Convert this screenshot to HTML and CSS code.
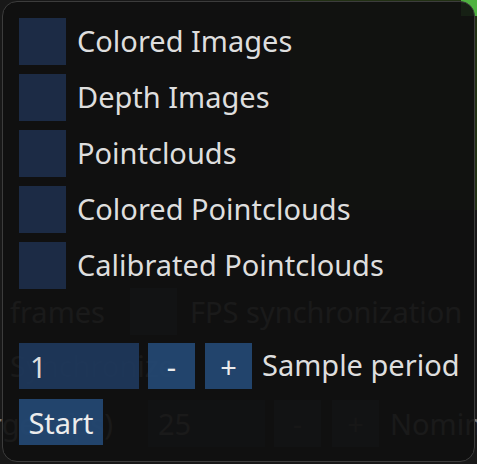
FILE: index.html
```
<!DOCTYPE html>
<html>
<head>
<meta charset="utf-8">
<link rel="stylesheet" href="styles.css">
</head>
<body>
<div class="scene">
  <div class="bg">
    <div class="bg-top"><div class="bg-panel"><span class="bg-green"></span></div></div>
    <div class="bg-row r1">
      <span class="g-text g-frames">frames</span>
      <span class="g-box"></span>
      <span class="g-text">FPS synchronization</span>
    </div>
    <div class="bg-row r2">
      <span class="g-text g-sync">Synchronize</span>
    </div>
    <div class="bg-row r3">
      <span class="g-text g-target">Target (fps)</span>
      <span class="g-input">25</span>
      <span class="g-box g-btn">-</span>
      <span class="g-box g-btn">+</span>
      <span class="g-text">Nominal</span>
    </div>
  </div>
  <div class="popup">
    <div class="check-row"><span class="check"></span><span class="label">Colored Images</span></div>
    <div class="check-row"><span class="check"></span><span class="label">Depth Images</span></div>
    <div class="check-row"><span class="check"></span><span class="label">Pointclouds</span></div>
    <div class="check-row"><span class="check"></span><span class="label">Colored Pointclouds</span></div>
    <div class="check-row"><span class="check"></span><span class="label">Calibrated Pointclouds</span></div>
    <div class="input-row">
      <span class="input">1</span>
      <span class="btn small">-</span>
      <span class="btn small">+</span>
      <span class="label">Sample period</span>
    </div>
    <div class="start-row"><span class="btn start">Start</span></div>
  </div>
</div>
</body>
</html>
```
FILE: styles.css
```
html, body {
  margin: 0;
  padding: 0;
  background: #161616;
}
.scene {
  position: relative;
  width: 477px;
  height: 464px;
  overflow: hidden;
  font-family: "Noto Sans", "Open Sans", sans-serif;
  font-size: 29px;
}
.bg {
  display: flex;
  flex-direction: column;
  width: 477px;
  height: 464px;
  background: #181818;
}
.bg-top {
  height: 210px;
  display: flex;
  justify-content: flex-end;
  flex: none;
}
.bg-panel {
  position: relative;
  width: 187px;
  height: 210px;
  background: rgb(34, 48, 20);
}
.bg-green {
  position: absolute;
  top: 0;
  right: 0;
  width: 16px;
  height: 16px;
  background: #4fb340;
}
.bg-row {
  display: flex;
  align-items: center;
  height: 47px;
  flex: none;
  white-space: nowrap;
  color: #787878;
}
.bg-row > span { flex: none; }
.r1 { margin-top: 78px; padding-left: 10px; }
.r2 { margin-top: 7px; padding-left: 10px; }
.r3 { margin-top: 11px; }
.g-frames { width: 120px; }
.g-box {
  display: flex;
  align-items: center;
  justify-content: center;
  width: 47px;
  height: 47px;
  background: #2c3444;
  margin-right: 13px;
}
.g-target { margin-left: -40px; width: 188px; }
.g-input {
  width: 107px;
  height: 47px;
  display: flex;
  align-items: center;
  padding-left: 10px;
  background: #262a33;
  margin-right: 9px;
}
.g-btn { margin-right: 11px; color: #5a5a5a; }
.popup {
  position: absolute;
  left: 2px;
  top: 1px;
  right: 2px;
  bottom: 2px;
  border: 1px solid #3c3c3c;
  border-radius: 15px;
  background: rgba(15, 15, 15, 0.9);
  padding: 16px 0 0 16px;
  box-sizing: border-box;
  display: flex;
  flex-direction: column;
  color: #dedede;
}
.check-row {
  display: flex;
  align-items: center;
  height: 47px;
  margin-bottom: 9px;
}
.check {
  width: 47px;
  height: 47px;
  background: #1c2b45;
  margin-right: 11px;
}
.label {
  white-space: nowrap;
  line-height: 1;
  margin-top: -3px;
}
.input-row {
  display: flex;
  align-items: center;
  margin-top: 45px;
  height: 46px;
}
.input {
  width: 109px;
  height: 46px;
  padding-left: 11px;
  background: rgba(30, 56, 92, 0.92);
  display: flex;
  align-items: center;
  margin-right: 9px;
}
.btn {
  display: flex;
  align-items: center;
  justify-content: center;
  height: 46px;
  background: rgba(36, 72, 114, 0.95);
  color: #ececec;
}
.small {
  width: 47px;
  margin-right: 10px;
}
.start-row {
  display: flex;
  margin-top: 10px;
}
.start {
  width: 84px;
}
```
